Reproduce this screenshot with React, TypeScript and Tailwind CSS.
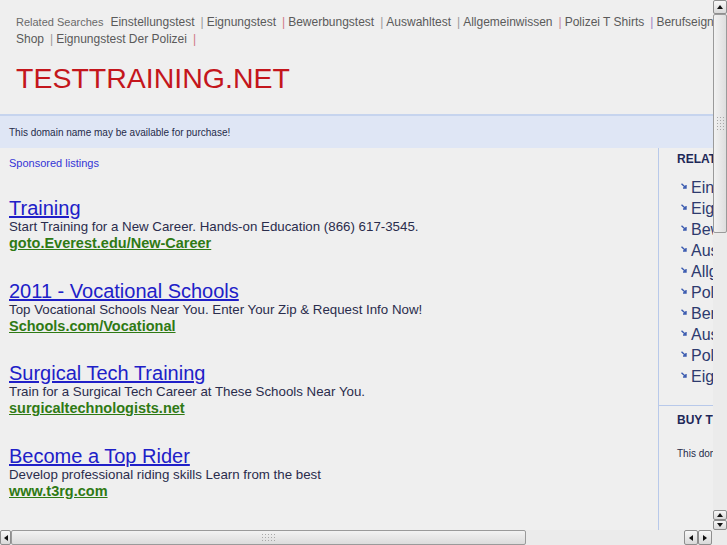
import React from "react"

// Related searches shown in the header strip
const topLine1 = [
	{ id: "einstellungstest", text: "Einstellungstest", sep: "text-[#9a9a9a]" },
	{ id: "eignungstest", text: "Eignungstest", sep: "text-[#d07a86]" },
	{ id: "bewerbungstest", text: "Bewerbungstest", sep: "text-[#9a9a9a]" },
	{ id: "auswahltest", text: "Auswahltest", sep: "text-[#9a9a9a]" },
	{ id: "allgemeinwissen", text: "Allgemeinwissen", sep: "text-[#c98a9a]" },
	{ id: "polizei-t-shirts", text: "Polizei T Shirts", sep: "text-[#9c82c4]" },
]

const topLine2 = [
	{ id: "shop", text: "Shop", sep: "text-[#9a9a9a]" },
	{ id: "eignungstest-polizei", text: "Eignungstest Der Polizei", sep: "text-[#d07a86]" },
]

interface Ad {
	id: string
	title: string
	desc: string
	url: string
}

const ads: Ad[] = [
	{
		id: "everest",
		title: "Training",
		desc: "Start Training for a New Career. Hands-on Education (866) 617-3545.",
		url: "goto.Everest.edu/New-Career",
	},
	{
		id: "vocational",
		title: "2011 - Vocational Schools",
		desc: "Top Vocational Schools Near You. Enter Your Zip & Request Info Now!",
		url: "Schools.com/Vocational",
	},
	{
		id: "surgical",
		title: "Surgical Tech Training",
		desc: "Train for a Surgical Tech Career at These Schools Near You.",
		url: "surgicaltechnologists.net",
	},
	{
		id: "rider",
		title: "Become a Top Rider",
		desc: "Develop professional riding skills Learn from the best",
		url: "www.t3rg.com",
	},
]

// Sidebar list (clipped by the window edge)
const related = [
	"Einstellungstest",
	"Eignungstest",
	"Bewerbungstest",
	"Auswahltest",
	"Allgemeinwissen",
	"Polizei T Shirts",
	"Berufseignungstest",
	"Auswahltest Polizei",
	"Polizei Shop",
	"Eignungstest Der Polizei",
]

function Arrow({ dir }: { dir: "up" | "down" | "left" | "right" }) {
	const pts = {
		up: "1,6 4,2 7,6",
		down: "1,2 4,6 7,2",
		left: "6,1 2,4 6,7",
		right: "2,1 6,4 2,7",
	}[dir]
	return (
		<svg width="8" height="8" viewBox="0 0 8 8">
			<polygon points={pts} fill="#111" />
		</svg>
	)
}

function ScrollButton({ dir, className }: { dir: "up" | "down" | "left" | "right"; className: string }) {
	return (
		<div
			className={`${className} flex items-center justify-center rounded-[2px] border border-[#8e8e8e] bg-gradient-to-b from-[#f8f8f8] to-[#d9d9d9]`}
		>
			<Arrow dir={dir} />
		</div>
	)
}

function Grip({ vertical }: { vertical?: boolean }) {
	return (
		<div className={`grid ${vertical ? "grid-cols-3" : "grid-cols-5"} gap-[2px]`}>
			{Array.from({ length: 15 }).map((_, i) => (
				<span key={i} className="block h-[1px] w-[1px] bg-[#a8a8a8]" />
			))}
		</div>
	)
}

function SideArrow() {
	return (
		<svg width="6" height="6" viewBox="0 0 6 6" className="shrink-0 -translate-y-[2px]">
			<path d="M0.5 0.8 L4.6 4.6 M2 5 L5 5 L5 2" stroke="#3b5bb0" strokeWidth="1.4" fill="none" />
		</svg>
	)
}

export default function App() {
	return (
		<div className="flex h-[545px] w-[727px] flex-col overflow-hidden bg-[#efefef] font-['Liberation_Sans',Arial,sans-serif]">
			<div className="flex min-h-0 flex-1">
				{/* Page content */}
				<div className="min-w-0 flex-1 overflow-hidden">
					{/* Header */}
					<div className="h-[116px] border-b-2 border-[#c6d4ee] pl-4 pt-3">
						<div className="whitespace-nowrap leading-[17px] text-[#5a5a5a]">
							<span className="text-[11px] text-[#6a6a6a]">Related Searches</span>
							<span className="ml-[7px] text-[12px]">
								{topLine1.map((l) => (
									<React.Fragment key={l.id}>
										<a href={l.id}>{l.text}</a>
										<span className={`ml-[6px] mr-[3px] ${l.sep}`}>|</span>
									</React.Fragment>
								))}
								<a href="berufseignungstest">Berufseignungstest Polizei</a>
							</span>
						</div>
						<div className="whitespace-nowrap text-[12px] leading-[17px] text-[#5a5a5a]">
							{topLine2.map((l) => (
								<React.Fragment key={l.id}>
									<a href={l.id}>{l.text}</a>
									<span className={`ml-[6px] mr-[3px] ${l.sep}`}>|</span>
								</React.Fragment>
							))}
						</div>
						<div className="mt-4 text-[28.5px] leading-[29px] text-[#c4161c]">TESTTRAINING.NET</div>
					</div>

					{/* Purchase notice */}
					<div className="flex h-8 items-center bg-[#dfe6f5] pl-[9px] text-[10px] text-[#252b4a]">
						This domain name may be available for purchase!
					</div>

					{/* Main area */}
					<div className="flex h-[382px]">
						<div className="w-[659px] shrink-0 border-r border-[#b8c9ea] pl-[9px] pt-[7.5px]">
							<div className="text-[11px] leading-[14px] text-[#3434d6]">Sponsored listings</div>
							{ads.map((ad) => (
								<div key={ad.id} className="mt-[28.5px]">
									<a href="#" className="block text-[20px] leading-[20px] text-[#2020c8] underline">
										{ad.title}
									</a>
									<div className="whitespace-nowrap text-[13.3px] leading-[17px] text-[#2a2c4c]">{ad.desc}</div>
									<a href="#" className="block text-[14.5px] font-bold leading-[17px] text-[#2f7a14] underline">
										{ad.url}
									</a>
								</div>
							))}
						</div>

						{/* Right sidebar */}
						<div className="w-[220px] shrink-0">
							<div className="pl-[18px] pt-1">
								<div className="text-[12px] font-bold leading-[14px] text-[#1e2858]">RELATED SEARCHES</div>
								<ul className="mt-[11px] pl-1">
									{related.map((r, i) => (
										<li key={i} className="flex h-[21px] items-center gap-[4px] whitespace-nowrap text-[16px] text-[#2d3a6e]">
											<SideArrow />
											{r}
										</li>
									))}
								</ul>
							</div>
							<div className="mt-[18px] border-t border-[#b8c9ea] pl-[18px] pt-[7px]">
								<div className="text-[12px] font-bold leading-[14px] text-[#1e2858]">BUY THIS DOMAIN</div>
								<div className="mt-[19px] whitespace-nowrap text-[10px] text-[#252b4a]">
									This domain name may be available for purchase!
								</div>
							</div>
						</div>
					</div>
				</div>

				{/* Vertical scrollbar */}
				<div className="flex w-[14px] shrink-0 flex-col bg-[#ebebeb]">
					<ScrollButton dir="up" className="h-[14px] w-[14px]" />
					<div className="flex h-[219px] items-center justify-center rounded-[2px] border border-[#9a9a9a] bg-gradient-to-r from-[#f2f2f2] to-[#dedede]">
						<Grip vertical />
					</div>
					<div className="flex-1" />
					<ScrollButton dir="up" className="h-[10px] w-[14px]" />
					<ScrollButton dir="down" className="h-[10px] w-[14px]" />
				</div>
			</div>

			{/* Horizontal scrollbar */}
			<div className="flex h-[15px] shrink-0 bg-[#ebebeb]">
				<ScrollButton dir="left" className="h-[15px] w-[11px]" />
				<div className="flex h-[15px] w-[515px] items-center justify-center rounded-[2px] border border-[#9a9a9a] bg-gradient-to-b from-[#f2f2f2] to-[#dcdcdc]">
					<Grip />
				</div>
				<div className="flex-1" />
				<ScrollButton dir="left" className="h-[15px] w-[14px]" />
				<ScrollButton dir="right" className="h-[15px] w-[14px]" />
				<div className="w-[15px]" />
			</div>
		</div>
	)
}
